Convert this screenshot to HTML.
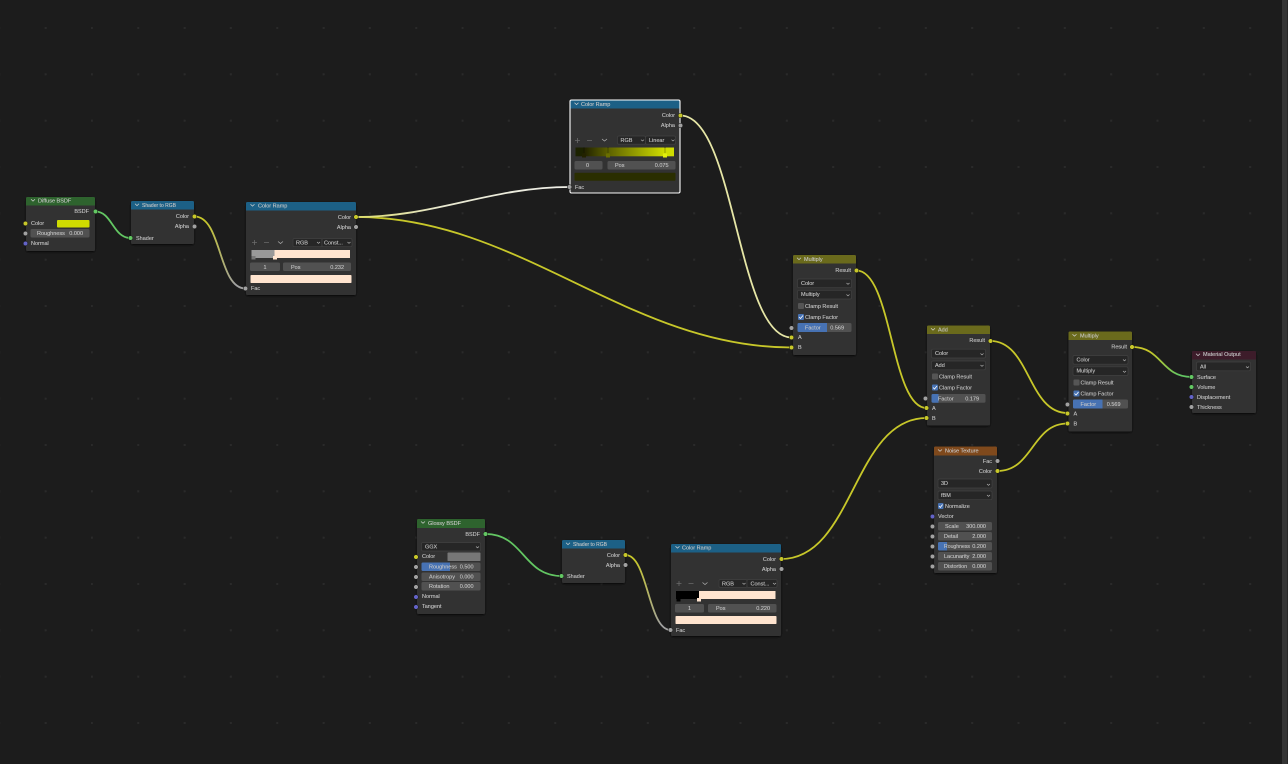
<!DOCTYPE html>
<html><head><meta charset="utf-8"><style>
html,body{margin:0;padding:0;width:1288px;height:764px;overflow:hidden;background:#1d1d1d}
svg{display:block}
text{font-family:"Liberation Sans",sans-serif;font-size:5.5px;fill:#c6c6c6;stroke:#c6c6c6;stroke-width:.1}
.h{fill:#c8c8c8}
.e{text-anchor:end}
.c{text-anchor:middle}
.b{fill:#303030}
.f{fill:#515151}
.d{fill:#282828;stroke:#404040;stroke-width:.7}
.bl{fill:#4772b3}
.cb{fill:#545454}
.ck{fill:#4772b3}
.w{fill:none;stroke:#fff;stroke-width:1.1}
.a{fill:none;stroke:#bbb;stroke-width:.6}
.ch{fill:none;stroke:#d0d0d0;stroke-width:.7}
.y,.g,.p,.n{stroke:#151515;stroke-width:.5}
.y{fill:#c7c729}.g{fill:#63c763}.p{fill:#6363c7}.n{fill:#a1a1a1}
.l{fill:none;stroke-width:1.8;stroke-linecap:round}
</style></head><body>
<svg width="1288" height="764" viewBox="0 0 1288 764" xmlns="http://www.w3.org/2000/svg">
<defs>
<pattern id="grid" x="45.6" y="28" width="46.33" height="46.33" patternUnits="userSpaceOnUse"><rect x="-1" y="-1" width="2" height="2" fill="#2a2a2a"/><rect x="45.33" y="-1" width="2" height="2" fill="#2a2a2a"/><rect x="-1" y="45.33" width="2" height="2" fill="#2a2a2a"/><rect x="45.33" y="45.33" width="2" height="2" fill="#2a2a2a"/></pattern>
<filter id="sh" x="-20%" y="-20%" width="140%" height="140%"><feDropShadow dx="0" dy="1" stdDeviation="1.3" flood-color="#000" flood-opacity=".75"/></filter>
<filter id="soft" x="0" y="0" width="100%" height="100%"><feGaussianBlur stdDeviation=".3"/></filter>
<linearGradient id="yn1" gradientUnits="userSpaceOnUse" x1="195" y1="0" x2="245" y2="0"><stop offset=".2" stop-color="#c7c729"/><stop offset=".8" stop-color="#a1a1a1"/></linearGradient>
<linearGradient id="yn2" gradientUnits="userSpaceOnUse" x1="626" y1="0" x2="670" y2="0"><stop offset=".2" stop-color="#c7c729"/><stop offset=".8" stop-color="#a1a1a1"/></linearGradient>
<linearGradient id="yg" gradientUnits="userSpaceOnUse" x1="1132" y1="0" x2="1191" y2="0"><stop offset=".3" stop-color="#c7c729"/><stop offset=".8" stop-color="#63c763"/></linearGradient>
<linearGradient id="yw" gradientUnits="userSpaceOnUse" x1="356" y1="0" x2="570" y2="0"><stop offset="0" stop-color="#dcdc70"/><stop offset=".4" stop-color="#e8e8d0"/><stop offset="1" stop-color="#efefe8"/></linearGradient>
<linearGradient id="ramp2" gradientUnits="userSpaceOnUse" x1="575.5" y1="0" x2="674" y2="0"><stop offset=".08" stop-color="#1f2000"/><stop offset=".33" stop-color="#5c6000"/><stop offset=".9" stop-color="#cfdc00"/></linearGradient>
</defs>
<g filter="url(#soft)">
<rect width="1288" height="764" fill="#1d1d1d"/>
<rect width="1282" height="764" fill="url(#grid)"/>
<rect x="1282" y="0" width="5.5" height="764" fill="#363636"/>

<!-- links -->
<path class="l" stroke="#63c763" d="M95.5 211.5C112 211.5 113 238 130.5 238"/>
<path class="l" stroke="url(#yn1)" d="M194.5 216.5C222 216.5 218 288.5 245.5 288.5"/>
<path class="l" stroke="#c7c729" d="M356 217C520 217 628 347.5 791.5 347.5"/>
<path class="l" stroke="url(#yw)" d="M356 217C436 217 490 187 570 187"/>
<path class="l" stroke="#e6e6a6" d="M680.5 115.5C735 115.5 737 337.5 791.5 337.5"/>
<path class="l" stroke="#c7c729" d="M856.5 270.5C892 270.5 891 408 926.5 408"/>
<path class="l" stroke="#c7c729" d="M990.5 341C1030 341 1028 413 1067.5 413"/>
<path class="l" stroke="#c7c729" d="M997.5 471C1033 471 1032 423.5 1067.5 423.5"/>
<path class="l" stroke="url(#yg)" d="M1132 347C1162 347 1161 377 1191.5 377"/>
<path class="l" stroke="#63c763" d="M485.5 534C524 534 523 576 561.5 576"/>
<path class="l" stroke="url(#yn2)" d="M625.5 555C648 555 648 630 670.5 630"/>
<path class="l" stroke="#c7c729" d="M781 559C854 559 853 418 926.5 418"/>

<!-- Diffuse BSDF -->
<g>
<rect class="b" x="26" y="197" width="69" height="54" rx="1.500" filter="url(#sh)"/>
<path fill="#2e642d" d="M26 205.500V198.500a1.500 1.500 0 0 1 1.500-1.500H93.500a1.500 1.500 0 0 1 1.500 1.500V205.500Z"/>
<path class="ch" d="M31 199.300l2 1.800l2-1.800"/>
<text class="h" x="38" y="202.500">Diffuse BSDF</text>
<text class="e" x="89" y="213">BSDF</text>
<circle class="g" cx="95.500" cy="211.500" r="2.300"/>
<text x="31" y="225">Color</text>
<rect x="57" y="220" width="32.500" height="7.500" rx="1" fill="#cfdc00"/>
<circle class="y" cx="25.500" cy="223.500" r="2.300"/>
<rect class="f" x="30.500" y="229" width="59" height="8.500" rx="1.500"/>
<text x="37" y="235">Roughness</text><text class="e" x="83" y="235">0.000</text>
<circle class="n" cx="25.500" cy="233.500" r="2.300"/>
<text x="31" y="245">Normal</text>
<circle class="p" cx="25.500" cy="243.500" r="2.300"/>
</g>

<!-- Shader to RGB 1 -->
<g transform="translate(131 201)">
<rect class="b" width="63" height="43" rx="1.500" filter="url(#sh)"/>
<path fill="#1d6186" d="M0 8.500V1.500A1.500 1.500 0 0 1 1.500 0H61.500A1.500 1.500 0 0 1 63 1.500V8.500Z"/>
<path class="ch" d="M4 2.800l2 1.800l2-1.800"/>
<text class="h" x="11" y="6" textLength="34" lengthAdjust="spacingAndGlyphs">Shader to RGB</text>
<text class="e" x="58" y="17">Color</text><circle class="y" cx="63.500" cy="15.500" r="2.300"/>
<text class="e" x="58" y="27">Alpha</text><circle class="n" cx="63.500" cy="25.500" r="2.300"/>
<text x="5" y="39">Shader</text><circle class="g" cx="-.5" cy="37" r="2.300"/>
</g>

<!-- Shader to RGB 2 -->
<g transform="translate(562 540)">
<rect class="b" width="63" height="43" rx="1.500" filter="url(#sh)"/>
<path fill="#1d6186" d="M0 8.500V1.500A1.500 1.500 0 0 1 1.500 0H61.500A1.500 1.500 0 0 1 63 1.500V8.500Z"/>
<path class="ch" d="M4 2.800l2 1.800l2-1.800"/>
<text class="h" x="11" y="6" textLength="34" lengthAdjust="spacingAndGlyphs">Shader to RGB</text>
<text class="e" x="58" y="17">Color</text><circle class="y" cx="63.500" cy="15" r="2.300"/>
<text class="e" x="58" y="27">Alpha</text><circle class="n" cx="63.500" cy="25" r="2.300"/>
<text x="5" y="38">Shader</text><circle class="g" cx="-.5" cy="36" r="2.300"/>
</g>

<!-- Color Ramp 1 -->
<g transform="translate(246 202)">
<rect class="b" width="110" height="93" rx="1.500" filter="url(#sh)"/>
<path fill="#1d6186" d="M0 8.500V1.500A1.500 1.500 0 0 1 1.500 0H108.500A1.500 1.500 0 0 1 110 1.500V8.500Z"/>
<path class="ch" d="M4.500 2.300l2 1.800l2-1.800"/>
<text class="h" x="12" y="5.300">Color Ramp</text>
<text class="e" x="105" y="17">Color</text><circle class="y" cx="110" cy="15" r="2.300"/>
<text class="e" x="105" y="27">Alpha</text><circle class="n" cx="110" cy="25" r="2.300"/>
<path stroke="#6a6a6a" stroke-width=".8" fill="none" d="M6 40.500h5M8.500 38v5M18 40.500h5"/>
<path class="ch" d="M32 39.500l2.500 2l2.500-2" stroke-opacity=".8"/>
<rect class="d" x="47" y="36.500" width="29" height="8.200" rx="1.500"/>
<rect class="d" x="76" y="36.500" width="30" height="8.200" rx="1.500"/>
<text x="50" y="42.600">RGB</text><text x="78" y="42.600">Const...</text>
<path class="a" d="M71 40l1.500 1.300l1.500-1.300M101.500 40l1.500 1.300l1.500-1.300"/>
<rect x="5.500" y="48" width="98.500" height="8" fill="#ffe4cf"/>
<rect x="5.500" y="48" width="23" height="8" fill="#999"/>
<rect x="5.500" y="54" width="4" height="3.500" fill="#777"/>
<rect x="27" y="54" width="4" height="3.500" fill="#ffe4cf"/>
<rect class="f" x="4" y="60.500" width="30" height="8.500" rx="1.500"/>
<rect class="f" x="37" y="60.500" width="68" height="8.500" rx="1.500"/>
<text class="c" x="19" y="66.800">1</text><text x="45" y="66.800">Pos</text><text class="e" x="98" y="66.800">0.232</text>
<rect x="4.500" y="73" width="101" height="8" fill="#ffe4cf" rx=".8"/>
<text x="5" y="88">Fac</text><circle class="n" cx="-.5" cy="86.500" r="2.300"/>
</g>

<!-- Color Ramp 2 selected -->
<g transform="translate(570 100)">
<rect class="b" width="110" height="93" rx="1.500" filter="url(#sh)"/>
<path fill="#1d6186" d="M0 8.500V1.500A1.500 1.500 0 0 1 1.500 0H108.500A1.500 1.500 0 0 1 110 1.500V8.500Z"/>
<rect class="w" width="110" height="93" rx="1.500"/>
<path class="ch" d="M4.500 2.800l2 1.800l2-1.800"/>
<text class="h" x="11" y="5.800">Color Ramp</text>
<text class="e" x="105" y="17">Color</text><circle class="y" cx="110.500" cy="15.500" r="2.300"/>
<text class="e" x="105" y="27">Alpha</text><circle class="n" cx="110.500" cy="25.500" r="2.300"/>
<path stroke="#6a6a6a" stroke-width=".8" fill="none" d="M5 40.500h5M7.500 38v5M17 40.500h5"/>
<path class="ch" d="M32 39l2.500 2l2.500-2" stroke-opacity=".8"/>
<rect class="d" x="47.500" y="36" width="28" height="8.200" rx="1.500"/>
<rect class="d" x="75.500" y="36" width="30" height="8.200" rx="1.500"/>
<text x="50.500" y="42">RGB</text><text x="79" y="42">Linear</text>
<path class="a" d="M71 39.700l1.500 1.300l1.500-1.300M101.500 39.700l1.500 1.300l1.500-1.300"/>
<rect x="5.500" y="47.500" width="98.500" height="8.800" fill="url(#ramp2)" transform="translate(0 0)" style="display:none"/>
<g transform="translate(-570 -100)"><rect x="575.500" y="147.500" width="98.500" height="8.800" fill="url(#ramp2)"/></g>
<path stroke="#000" stroke-width=".6" stroke-dasharray="1 1" d="M14 47.500v6M38 47.500v6M95 47.500v6" fill="none"/>
<rect x="12" y="53.500" width="4" height="4" fill="#222400"/>
<rect x="36" y="53.500" width="4" height="4" fill="#6a6e00"/>
<rect x="93" y="53.500" width="4" height="4" fill="#e2ee10"/>
<rect class="f" x="4.500" y="61" width="28" height="8.500" rx="1.500"/>
<rect class="f" x="37.500" y="61" width="68" height="8.500" rx="1.500"/>
<text class="c" x="17.500" y="67">0</text><text x="45" y="67">Pos</text><text class="e" x="98.500" y="67">0.075</text>
<rect x="4.500" y="72.700" width="101" height="8" fill="#2b2d02" rx=".8"/>
<text x="5" y="89">Fac</text><circle class="n" cx="-.5" cy="87" r="2.300"/>
</g>

<!-- Color Ramp 3 -->
<g transform="translate(671 544)">
<rect class="b" width="110" height="92" rx="1.500" filter="url(#sh)"/>
<path fill="#1d6186" d="M0 8.500V1.500A1.500 1.500 0 0 1 1.500 0H108.500A1.500 1.500 0 0 1 110 1.500V8.500Z"/>
<path class="ch" d="M4.500 2.300l2 1.800l2-1.800"/>
<text class="h" x="11" y="5.300">Color Ramp</text>
<text class="e" x="105" y="17">Color</text><circle class="y" cx="110.500" cy="15" r="2.300"/>
<text class="e" x="105" y="27">Alpha</text><circle class="n" cx="110.500" cy="25" r="2.300"/>
<path stroke="#6a6a6a" stroke-width=".8" fill="none" d="M5.500 39.500h5M8 37v5M17.500 39.500h5"/>
<path class="ch" d="M31.500 38.500l2.500 2l2.500-2" stroke-opacity=".8"/>
<rect class="d" x="48" y="35.500" width="28" height="8" rx="1.500"/>
<rect class="d" x="76" y="35.500" width="30" height="8" rx="1.500"/>
<text x="51" y="41.300">RGB</text><text x="79.500" y="41.300">Const...</text>
<path class="a" d="M71.500 39l1.500 1.300l1.500-1.300M102 39l1.500 1.300l1.500-1.300"/>
<rect x="5" y="47" width="99.500" height="8" fill="#ffe4cf"/>
<rect x="5" y="47" width="23" height="8" fill="#000"/>
<rect x="5.500" y="54" width="4" height="3.500" fill="#000"/>
<rect x="26" y="54" width="4" height="3.500" fill="#ffe4cf"/>
<rect class="f" x="4" y="60" width="29" height="8.500" rx="1.500"/>
<rect class="f" x="37" y="60" width="68.500" height="8.500" rx="1.500"/>
<text class="c" x="18.500" y="66.200">1</text><text x="45" y="66.200">Pos</text><text class="e" x="99" y="66.200">0.220</text>
<rect x="4.500" y="72" width="101" height="8" fill="#ffe4cf" rx=".8"/>
<text x="5" y="88">Fac</text><circle class="n" cx="-.5" cy="86" r="2.300"/>
</g>

<!-- Multiply 1 -->
<g transform="translate(793 255)">
<rect class="b" width="63" height="100" rx="1.500" filter="url(#sh)"/>
<path fill="#6a6a1c" d="M0 8.500V1.500A1.500 1.500 0 0 1 1.500 0H61.500A1.500 1.500 0 0 1 63 1.500V8.500Z"/>
<path class="ch" d="M4 2.800l2 1.800l2-1.800"/>
<text class="h" x="11" y="6">Multiply</text>
<text class="e" x="58" y="17">Result</text><circle class="y" cx="63.500" cy="15.500" r="2.300"/>
<rect class="d" x="4.500" y="24" width="54" height="8.700" rx="1.500"/><text x="8" y="30">Color</text><path class="a" d="M53.500 28l1.500 1.300l1.500-1.300"/>
<rect class="d" x="4.500" y="35.300" width="54" height="8.700" rx="1.500"/><text x="8" y="41">Multiply</text><path class="a" d="M53.500 39.500l1.500 1.300l1.500-1.300"/>
<rect class="cb" x="5" y="48" width="6" height="6" rx="1"/><text x="12" y="53">Clamp Result</text>
<rect class="ck" x="5" y="59" width="6" height="6" rx="1"/><path fill="none" stroke="#fff" stroke-width=".8" d="M6 62l1.500 1.500l2.500-3"/><text x="12" y="64">Clamp Factor</text>
<rect class="f" x="4.500" y="68" width="54" height="9" rx="1.500"/>
<path class="bl" d="M6 68H34V77H6a1.500 1.500 0 0 1-1.500-1.500V69.500A1.500 1.500 0 0 1 6 68Z"/>
<text x="12" y="74.500">Factor</text><text class="e" x="51" y="74.500">0.569</text>
<circle class="n" cx="-1.500" cy="73" r="2.300"/>
<text x="5" y="84">A</text><circle class="y" cx="-1.500" cy="82.500" r="2.300"/>
<text x="5" y="94">B</text><circle class="y" cx="-1.500" cy="92.500" r="2.300"/>
</g>

<!-- Add -->
<g transform="translate(927 325.500)">
<rect class="b" width="63" height="100" rx="1.500" filter="url(#sh)"/>
<path fill="#6a6a1c" d="M0 8.500V1.500A1.500 1.500 0 0 1 1.500 0H61.500A1.500 1.500 0 0 1 63 1.500V8.500Z"/>
<path class="ch" d="M4 2.800l2 1.800l2-1.800"/>
<text class="h" x="11" y="6">Add</text>
<text class="e" x="58" y="16.500">Result</text><circle class="y" cx="63.500" cy="15.500" r="2.300"/>
<rect class="d" x="4.500" y="23.700" width="54" height="8.800" rx="1.500"/><text x="8" y="29.500">Color</text><path class="a" d="M53.500 28l1.500 1.300l1.500-1.300"/>
<rect class="d" x="4.500" y="35.500" width="54" height="8.800" rx="1.500"/><text x="8" y="41.500">Add</text><path class="a" d="M53.500 39.500l1.500 1.300l1.500-1.300"/>
<rect class="cb" x="5" y="48" width="6" height="6" rx="1"/><text x="12" y="53">Clamp Result</text>
<rect class="ck" x="5" y="59" width="6" height="6" rx="1"/><path fill="none" stroke="#fff" stroke-width=".8" d="M6 62l1.500 1.500l2.500-3"/><text x="12" y="64">Clamp Factor</text>
<rect class="f" x="4.500" y="68.500" width="54" height="8.800" rx="1.500"/>
<path class="bl" d="M6 68.500H11.500V77.300H6a1.500 1.500 0 0 1-1.500-1.500V70A1.500 1.500 0 0 1 6 68.500Z"/>
<text x="11" y="74.800">Factor</text><text class="e" x="52" y="74.800">0.179</text>
<circle class="n" cx="-1.500" cy="73" r="2.300"/>
<text x="5" y="84.500">A</text><circle class="y" cx="-.5" cy="82.500" r="2.300"/>
<text x="5" y="94.500">B</text><circle class="y" cx="-.5" cy="92.500" r="2.300"/>
</g>

<!-- Multiply 2 -->
<g transform="translate(1068.500 331.500)">
<rect class="b" width="63.500" height="100" rx="1.500" filter="url(#sh)"/>
<path fill="#6a6a1c" d="M0 8.500V1.500A1.500 1.500 0 0 1 1.500 0H62A1.500 1.500 0 0 1 63.500 1.500V8.500Z"/>
<path class="ch" d="M4 2.800l2 1.800l2-1.800"/>
<text class="h" x="11.500" y="6">Multiply</text>
<text class="e" x="58.500" y="17">Result</text><circle class="y" cx="63.500" cy="15.500" r="2.300"/>
<rect class="d" x="4.500" y="24" width="55" height="8.700" rx="1.500"/><text x="8" y="30">Color</text><path class="a" d="M54.500 28l1.500 1.300l1.500-1.300"/>
<rect class="d" x="4.500" y="35.300" width="55" height="8.700" rx="1.500"/><text x="8" y="41">Multiply</text><path class="a" d="M54.500 39.500l1.500 1.300l1.500-1.300"/>
<rect class="cb" x="5" y="48" width="6" height="6" rx="1"/><text x="12" y="53">Clamp Result</text>
<rect class="ck" x="5" y="59" width="6" height="6" rx="1"/><path fill="none" stroke="#fff" stroke-width=".8" d="M6 62l1.500 1.500l2.500-3"/><text x="12" y="64">Clamp Factor</text>
<rect class="f" x="4.500" y="68" width="55" height="9" rx="1.500"/>
<path class="bl" d="M6 68H34V77H6a1.500 1.500 0 0 1-1.500-1.500V69.500A1.500 1.500 0 0 1 6 68Z"/>
<text x="12" y="74.500">Factor</text><text class="e" x="52" y="74.500">0.569</text>
<circle class="n" cx="-1" cy="73" r="2.300"/>
<text x="5" y="84">A</text><circle class="y" cx="-1" cy="82" r="2.300"/>
<text x="5" y="94">B</text><circle class="y" cx="-1" cy="92" r="2.300"/>
</g>

<!-- Noise Texture -->
<g>
<rect class="b" x="934" y="446.500" width="63" height="126.500" rx="1.500" filter="url(#sh)"/>
<path fill="#7f4a1f" d="M934 455.500V448A1.500 1.500 0 0 1 935.500 446.500H995.500A1.500 1.500 0 0 1 997 448V455.500Z"/>
<path class="ch" d="M938 449.500l2 1.800l2-1.800"/>
<text class="h" x="945" y="452.500">Noise Texture</text>
<text class="e" x="992" y="463">Fac</text><circle class="n" cx="997.500" cy="461" r="2.300"/>
<text class="e" x="992" y="473">Color</text><circle class="y" cx="997.500" cy="471" r="2.300"/>
<rect class="d" x="938" y="479" width="54" height="9" rx="1.500"/><text x="941" y="485">3D</text><path class="a" d="M987 484l1.500 1.300l1.500-1.300"/>
<rect class="d" x="938" y="491" width="54" height="8.700" rx="1.500"/><text x="941" y="497">fBM</text><path class="a" d="M987 495l1.500 1.300l1.500-1.300"/>
<rect class="ck" x="938" y="503" width="5.500" height="6" rx="1"/><path fill="none" stroke="#fff" stroke-width=".8" d="M939 506l1.300 1.500l2.300-3"/><text x="945" y="508">Normalize</text>
<text x="938" y="518">Vector</text><circle class="p" cx="932.500" cy="516.500" r="2.300"/>
<rect class="f" x="938" y="522" width="54" height="8.500" rx="1.500"/><text x="945" y="528">Scale</text><text class="e" x="986" y="528">300.000</text><circle class="n" cx="932.500" cy="526.500" r="2.300"/>
<rect class="f" x="938" y="532" width="54" height="8.500" rx="1.500"/><text x="944" y="538">Detail</text><text class="e" x="986" y="538">2.000</text><circle class="n" cx="932.500" cy="536.500" r="2.300"/>
<rect class="f" x="938" y="542" width="54" height="8.500" rx="1.500"/><path class="bl" d="M939.500 542H947V550.500H939.500a1.500 1.500 0 0 1-1.500-1.500V543.500A1.500 1.500 0 0 1 939.500 542Z"/><text x="944" y="548" textLength="26" lengthAdjust="spacingAndGlyphs">Roughness</text><text class="e" x="986" y="548">0.200</text><circle class="n" cx="932.500" cy="546.500" r="2.300"/>
<rect class="f" x="938" y="552" width="54" height="8.500" rx="1.500"/><text x="944" y="558">Lacunarity</text><text class="e" x="986" y="558">2.000</text><circle class="n" cx="932.500" cy="556.500" r="2.300"/>
<rect class="f" x="938" y="562" width="54" height="8.500" rx="1.500"/><text x="944" y="568">Distortion</text><text class="e" x="986" y="568">0.000</text><circle class="n" cx="932.500" cy="566.500" r="2.300"/>
</g>

<!-- Material Output -->
<g>
<rect class="b" x="1192" y="351" width="64" height="62" rx="1.500" filter="url(#sh)"/>
<path fill="#3c1d2b" d="M1192 359.500V352.500A1.500 1.500 0 0 1 1193.500 351H1254.500A1.500 1.500 0 0 1 1256 352.500V359.500Z"/>
<path class="ch" d="M1196 353.800l2 1.800l2-1.800"/>
<text class="h" x="1203" y="356">Material Output</text>
<rect class="d" x="1196.500" y="362" width="54" height="8.800" rx="1.500"/><text x="1200" y="368.500">All</text><path class="a" d="M1246 366.500l1.500 1.300l1.500-1.300"/>
<text x="1197" y="379">Surface</text><circle class="g" cx="1191.500" cy="377" r="2.300"/>
<text x="1197" y="389">Volume</text><circle class="g" cx="1191.500" cy="387" r="2.300"/>
<text x="1197" y="399">Displacement</text><circle class="p" cx="1191.500" cy="397" r="2.300"/>
<text x="1197" y="409">Thickness</text><circle class="n" cx="1191.500" cy="407" r="2.300"/>
</g>

<!-- Glossy BSDF -->
<g>
<rect class="b" x="417" y="519" width="68" height="95" rx="1.500" filter="url(#sh)"/>
<path fill="#2e642d" d="M417 528V520.500A1.500 1.500 0 0 1 418.500 519H483.500A1.500 1.500 0 0 1 485 520.500V528Z"/>
<path class="ch" d="M421 521.500l2 1.800l2-1.800"/>
<text class="h" x="428" y="524.800">Glossy BSDF</text>
<text class="e" x="480" y="536">BSDF</text><circle class="g" cx="485.500" cy="534" r="2.300"/>
<rect class="d" x="421.500" y="542.500" width="59" height="8.500" rx="1.500"/><text x="425" y="548.500">GGX</text><path class="a" d="M476 546.500l1.500 1.300l1.500-1.300"/>
<text x="422" y="558">Color</text><circle class="y" cx="416" cy="557" r="2.300"/>
<rect x="447.500" y="552.500" width="33" height="8.500" fill="#777" rx=".8"/>
<rect class="f" x="421.500" y="562.500" width="59" height="8.500" rx="1.500"/><path class="bl" d="M423 562.500H450V571H423a1.500 1.500 0 0 1-1.500-1.500V564A1.500 1.500 0 0 1 423 562.500Z"/><text x="429" y="568.500">Roughness</text><text class="e" x="473.500" y="568.500">0.500</text><circle class="n" cx="416" cy="567" r="2.300"/>
<rect class="f" x="421.500" y="572.500" width="59" height="8.500" rx="1.500"/><text x="429" y="578.500">Anisotropy</text><text class="e" x="473.500" y="578.500">0.000</text><circle class="n" cx="416" cy="577" r="2.300"/>
<rect class="f" x="421.500" y="582" width="59" height="8.500" rx="1.500"/><text x="429" y="588">Rotation</text><text class="e" x="473.500" y="588">0.000</text><circle class="n" cx="416" cy="587" r="2.300"/>
<text x="422" y="598">Normal</text><circle class="p" cx="416" cy="597" r="2.300"/>
<text x="422" y="608">Tangent</text><circle class="p" cx="416" cy="607" r="2.300"/>
</g>
</g>
</svg>
</body></html>
